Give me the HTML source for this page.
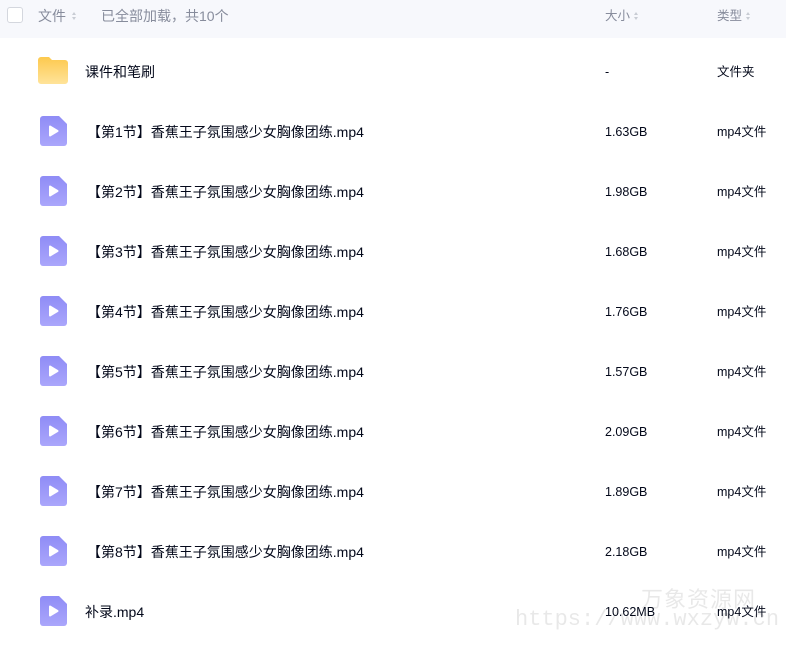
<!DOCTYPE html>
<html><head><meta charset="utf-8"><style>
body{margin:0;width:786px;height:655px;background:#fff;position:relative;overflow:hidden;font-family:"Liberation Sans","Noto Sans CJK SC",sans-serif;color:#03081a;}
.hdr{position:absolute;left:0;top:0;width:786px;height:38px;background:#f7f8fc;}
.t{position:absolute;font-size:14px;line-height:16px;white-space:nowrap;}
.g{color:#878c9c;}
.s{font-size:12.5px;}
.cb{position:absolute;left:7px;top:7px;width:14px;height:14px;border:1px solid #d4d7de;border-radius:3px;background:#fff;}
.sort{position:absolute;width:5px;height:9px;}
.sort:before{content:"";position:absolute;left:0;top:0;border-left:2.5px solid transparent;border-right:2.5px solid transparent;border-bottom:3px solid #c8ccd4;}
.sort:after{content:"";position:absolute;left:0;top:5px;border-left:2.5px solid transparent;border-right:2.5px solid transparent;border-top:3px solid #c8ccd4;}
.wm{position:absolute;color:rgba(0,0,0,0.09);white-space:nowrap;}
</style></head><body>
<div class="hdr"></div>
<div class="cb"></div>
<div class="t g" style="left:38px;top:8px">文件</div>
<div class="sort" style="left:72px;top:12px"></div>
<div class="t g" style="left:101px;top:8px">已全部加载，共10个</div>
<div class="t g s" style="left:605px;top:8px">大小</div>
<div class="sort" style="left:634px;top:12px"></div>
<div class="t g s" style="left:717px;top:8px">类型</div>
<div class="sort" style="left:746px;top:12px"></div>

<svg style="position:absolute;left:38px;top:57px" width="30" height="27" viewBox="0 0 30 27"><defs><linearGradient id="f" x1="0" y1="0" x2="0" y2="1"><stop offset="0" stop-color="#fdc94e"/><stop offset="1" stop-color="#ffe39a"/></linearGradient></defs><path d="M3 0h8l3 3h13a3 3 0 0 1 3 3v18a3 3 0 0 1-3 3H3a3 3 0 0 1-3-3V3a3 3 0 0 1 3-3z" fill="url(#f)"/></svg>
<div class="t" style="left:85px;top:64px">课件和笔刷</div>
<div class="t s" style="left:605px;top:64px">-</div>
<div class="t s" style="left:717px;top:64px">文件夹</div>

<div id="rows"></div>
<script>
var sizes=["1.63GB","1.98GB","1.68GB","1.76GB","1.57GB","2.09GB","1.89GB","2.18GB","10.62MB"];
var h="";
for(var i=0;i<9;i++){var y=131+60*i;
var name=i<8?"【第"+(i+1)+"节】香蕉王子氛围感少女胸像团练.mp4":"补录.mp4";
var nl=i<8?87:85;
h+='<svg style="position:absolute;left:40px;top:'+(y-15)+'px" width="27" height="30" viewBox="0 0 27 30"><defs><linearGradient id="v'+i+'" x1="0" y1="0" x2="0" y2="1"><stop offset="0" stop-color="#8f8cf6"/><stop offset="1" stop-color="#aaa6fb"/></linearGradient></defs><path d="M3 0h16l8 8v19a3 3 0 0 1-3 3H3a3 3 0 0 1-3-3V3a3 3 0 0 1 3-3z" fill="url(#v'+i+')"/><path d="M10 10.5v9l7.5-4.5z" fill="#fff" stroke="#fff" stroke-width="2" stroke-linejoin="round"/></svg>';
h+='<div class="t" style="left:'+nl+'px;top:'+(y-7)+'px">'+name+'</div>';
h+='<div class="t s" style="left:605px;top:'+(y-7)+'px">'+sizes[i]+'</div>';
h+='<div class="t s" style="left:717px;top:'+(y-7)+'px">mp4文件</div>';}
document.getElementById("rows").innerHTML=h;
</script>
<div class="wm" style="left:641px;top:582px;font-size:22px;letter-spacing:1px;font-family:'Liberation Sans','Noto Sans CJK SC',sans-serif">万象资源网</div>
<div class="wm" style="left:515px;top:607px;font-size:22px;font-family:'Liberation Mono',monospace">https://www.wxzyw.cn</div>
</body></html>
